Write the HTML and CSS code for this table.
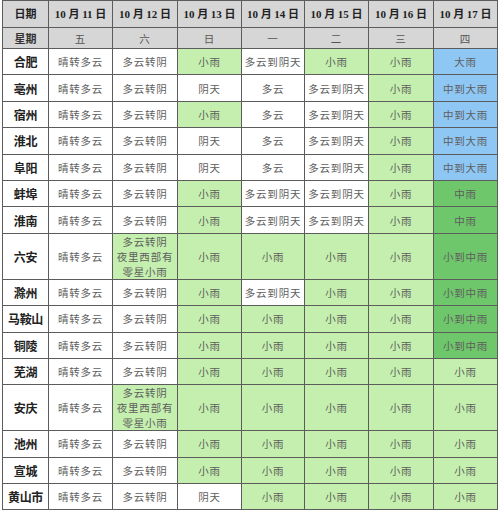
FILE: index.html
```html
<!DOCTYPE html>
<html lang="zh">
<head>
<meta charset="utf-8">
<link rel="stylesheet" href="styles.css">
</head>
<body>
<table class="wx">
  <colgroup>
    <col class="c-city"><col class="c-a"><col class="c-b"><col class="c-a"><col class="c-c"><col class="c-a"><col class="c-b"><col class="c-a">
  </colgroup>
  <tr class="r-h1 hd">
    <th>日期</th><th>10 月 11 日</th><th>10 月 12 日</th><th>10 月 13 日</th><th>10 月 14 日</th><th>10 月 15 日</th><th>10 月 16 日</th><th>10 月 17 日</th>
  </tr>
  <tr class="r-h2 hd wk">
    <th class="city">星期</th><td>五</td><td>六</td><td>日</td><td>一</td><td>二</td><td>三</td><td>四</td>
  </tr>
  <tr class="r"><th class="city">合肥</th><td>晴转多云</td><td>多云转阴</td><td class="g">小雨</td><td>多云到阴天</td><td class="g">小雨</td><td class="g">小雨</td><td class="b">大雨</td></tr>
  <tr class="r"><th class="city">亳州</th><td>晴转多云</td><td>多云转阴</td><td>阴天</td><td>多云</td><td>多云到阴天</td><td class="g">小雨</td><td class="b">中到大雨</td></tr>
  <tr class="r"><th class="city">宿州</th><td>晴转多云</td><td>多云转阴</td><td class="g">小雨</td><td>多云</td><td>多云到阴天</td><td class="g">小雨</td><td class="b">中到大雨</td></tr>
  <tr class="r"><th class="city">淮北</th><td>晴转多云</td><td>多云转阴</td><td>阴天</td><td>多云</td><td>多云到阴天</td><td class="g">小雨</td><td class="b">中到大雨</td></tr>
  <tr class="r"><th class="city">阜阳</th><td>晴转多云</td><td>多云转阴</td><td>阴天</td><td>多云</td><td>多云到阴天</td><td class="g">小雨</td><td class="b">中到大雨</td></tr>
  <tr class="r"><th class="city">蚌埠</th><td>晴转多云</td><td>多云转阴</td><td class="g">小雨</td><td>多云到阴天</td><td>多云到阴天</td><td class="g">小雨</td><td class="dg">中雨</td></tr>
  <tr class="r"><th class="city">淮南</th><td>晴转多云</td><td>多云转阴</td><td class="g">小雨</td><td>多云到阴天</td><td>多云到阴天</td><td class="g">小雨</td><td class="dg">中雨</td></tr>
  <tr class="r-t"><th class="city">六安</th><td>晴转多云</td><td class="g">多云转阴<br>夜里西部有<br>零星小雨</td><td class="g">小雨</td><td class="g">小雨</td><td class="g">小雨</td><td class="g">小雨</td><td class="dg">小到中雨</td></tr>
  <tr class="r"><th class="city">滁州</th><td>晴转多云</td><td>多云转阴</td><td class="g">小雨</td><td>多云到阴天</td><td class="g">小雨</td><td class="g">小雨</td><td class="dg">小到中雨</td></tr>
  <tr class="r"><th class="city">马鞍山</th><td>晴转多云</td><td>多云转阴</td><td class="g">小雨</td><td class="g">小雨</td><td class="g">小雨</td><td class="g">小雨</td><td class="dg">小到中雨</td></tr>
  <tr class="r"><th class="city">铜陵</th><td>晴转多云</td><td>多云转阴</td><td class="g">小雨</td><td class="g">小雨</td><td class="g">小雨</td><td class="g">小雨</td><td class="dg">小到中雨</td></tr>
  <tr class="r"><th class="city">芜湖</th><td>晴转多云</td><td>多云转阴</td><td class="g">小雨</td><td class="g">小雨</td><td class="g">小雨</td><td class="g">小雨</td><td class="g">小雨</td></tr>
  <tr class="r-t"><th class="city">安庆</th><td>晴转多云</td><td class="g">多云转阴<br>夜里西部有<br>零星小雨</td><td class="g">小雨</td><td class="g">小雨</td><td class="g">小雨</td><td class="g">小雨</td><td class="g">小雨</td></tr>
  <tr class="r"><th class="city">池州</th><td>晴转多云</td><td>多云转阴</td><td class="g">小雨</td><td class="g">小雨</td><td class="g">小雨</td><td class="g">小雨</td><td class="g">小雨</td></tr>
  <tr class="r"><th class="city">宣城</th><td>晴转多云</td><td>多云转阴</td><td class="g">小雨</td><td class="g">小雨</td><td class="g">小雨</td><td class="g">小雨</td><td class="g">小雨</td></tr>
  <tr class="r"><th class="city">黄山市</th><td>晴转多云</td><td>多云转阴</td><td>阴天</td><td class="g">小雨</td><td class="g">小雨</td><td class="g">小雨</td><td class="g">小雨</td></tr>
</table>
</body>
</html>
```

FILE: styles.css
```css
html, body {
  margin: 0;
  padding: 0;
  background: #ffffff;
}

body {
  padding: 0 2px;
  font-family: "Noto Sans CJK SC", sans-serif;
}

.wx {
  border-collapse: collapse;
  table-layout: fixed;
  width: 496px;
  border: 1px solid #5c5c5c;
}

.c-city { width: 46px; }
.c-a { width: 64px; }
.c-b { width: 65px; }
.c-c { width: 63px; }

.wx th,
.wx td {
  border: 1px solid #5c5c5c;
  padding: 0;
  text-align: center;
  vertical-align: middle;
  font-size: 10.5px;
  line-height: 15px;
  letter-spacing: 0.8px;
  color: #5e5e5e;
  font-weight: normal;
  white-space: nowrap;
  overflow: hidden;
}

.r-h1 { height: 27px; }
.r-h2 { height: 21px; }
.r { height: 26.4px; }
.r-t { height: 46px; }

.hd th,
.hd td {
  background: #d6d6d6;
}

.r-h1 th {
  font-family: "Liberation Serif", "Noto Sans CJK SC", serif;
  font-weight: bold;
  font-size: 11px;
  letter-spacing: 0;
  color: #222222;
}

.wk td {
  color: #555555;
  font-size: 10.5px;
}

.wx .city {
  font-weight: bold;
  font-size: 12px;
  letter-spacing: -0.3px;
  color: #222222;
}

.wk .city {
  font-size: 11px;
  letter-spacing: 0;
  color: #333333;
}

.wx .g { background: #c4efae; }
.wx .b { background: #8ec7f4; }
.wx .dg { background: #6fc76b; }
```
